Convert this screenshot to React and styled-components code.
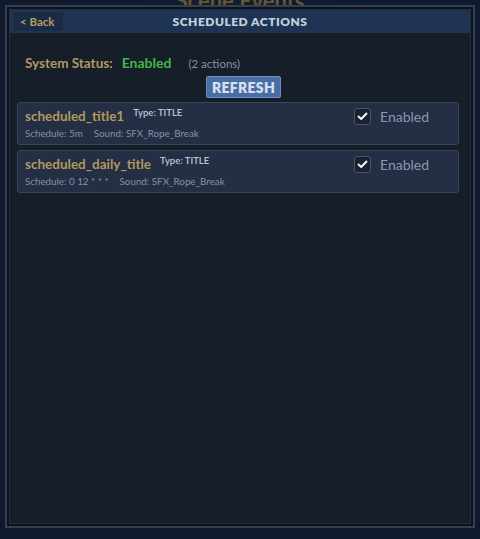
import React, { useState } from 'react';
import styled, { createGlobalStyle } from 'styled-components';

const GlobalStyle = createGlobalStyle`
  html, body {
    margin: 0;
    padding: 0;
    background: #111a2b;
    font-family: Lato, "Open Sans", sans-serif;
  }
  * { box-sizing: border-box; }
`;

const Page = styled.div`
  position: relative;
  width: 480px;
  height: 539px;
  padding: 5px 5px 11px 5px;
  overflow: hidden;
  background: radial-gradient(ellipse at 50% 40%, #152036 0%, #101a2c 70%);
`;

const BackdropTitle = styled.div`
  position: absolute;
  top: -13px;
  left: 0;
  right: 0;
  text-align: center;
  font-size: 22px;
  font-weight: 700;
  color: #7a6533;
  opacity: 0.8;
`;

const Frame = styled.div`
  position: relative;
  height: 100%;
  border: 2px solid #363f52;
  padding: 2px;
  background: #0d131e;
`;

const Panel = styled.div`
  height: 100%;
  display: flex;
  flex-direction: column;
  background: #161e2a;
  border: 1px solid #262f3e;
`;

const Header = styled.div`
  position: relative;
  height: 23px;
  display: flex;
  align-items: center;
  justify-content: center;
  background: #1e3452;
`;

const BackButton = styled.button`
  position: absolute;
  left: 3px;
  top: 2px;
  height: 19px;
  width: 50px;
  border: none;
  background: #1a2c45;
  color: #b49d5e;
  font-family: Lato, sans-serif;
  font-weight: 700;
  font-size: 11.5px;
  padding: 0 0 0 7px;
  text-align: left;
  cursor: pointer;
`;

const Title = styled.h1`
  margin: 0;
  font-size: 12px;
  font-weight: 800;
  letter-spacing: 0.5px;
  color: #c3d0de;
`;

const Body = styled.div`
  flex: 1;
  padding: 21px 11px 0 7px;
  display: flex;
  flex-direction: column;
`;

const StatusRow = styled.div`
  display: flex;
  align-items: baseline;
  padding-left: 8px;
  height: 22px;
`;

const StatusLabel = styled.span`
  color: #b09a5c;
  font-weight: 700;
  font-size: 13.5px;
`;

const StatusValue = styled.span`
  color: #46b548;
  font-weight: 700;
  font-size: 14px;
  margin-left: 9px;
`;

const Count = styled.span`
  color: #8790a0;
  font-size: 11.5px;
  margin-left: 17px;
`;

const RefreshRow = styled.div`
  display: flex;
  justify-content: center;
  margin-bottom: 4px;
  padding-left: 11px;
`;

const RefreshButton = styled.button`
  height: 22px;
  padding: 0 5px;
  background: #4a6ea4;
  border: 1px solid #6a8dc2;
  border-radius: 2px;
  color: #d6e2ef;
  font-family: Lato, sans-serif;
  font-weight: 800;
  font-size: 14px;
  letter-spacing: 0.3px;
  cursor: pointer;
`;

const CardList = styled.div`
  display: flex;
  flex-direction: column;
  gap: 5px;
`;

const Card = styled.div`
  display: flex;
  justify-content: space-between;
  height: 43px;
  padding: 3px 0 0 7px;
  background: #242e44;
  border: 1px solid #3a4457;
  border-radius: 3px;
`;

const CardInfo = styled.div`
  display: flex;
  flex-direction: column;
`;

const NameLine = styled.div`
  display: flex;
  align-items: flex-start;
  gap: 9px;
`;

const Name = styled.span`
  color: #b09a5c;
  font-weight: 700;
  font-size: 13.5px;
  margin-top: 2px;
`;

const TypeTag = styled.span`
  color: #c0c6d2;
  font-size: 9.5px;
  font-weight: 600;
  margin-top: 1px;
`;

const Meta = styled.div`
  display: flex;
  gap: 11px;
  margin-top: 3px;
  color: #8891a3;
  font-size: 9.8px;
`;

const Toggle = styled.label`
  display: flex;
  align-items: center;
  gap: 9px;
  height: 18px;
  margin-top: 1px;
  width: 104px;
  color: #8898ad;
  font-size: 14px;
  cursor: pointer;
`;

const Box = styled.span`
  width: 17px;
  height: 17px;
  border-radius: 3px;
  border: 1px solid #4a5469;
  background: #1a2131;
  display: flex;
  align-items: center;
  justify-content: center;
`;

const actions = [
  { name: 'scheduled_title1', type: 'TITLE', schedule: '5m', sound: 'SFX_Rope_Break' },
  { name: 'scheduled_daily_title', type: 'TITLE', schedule: '0 12 * * *', sound: 'SFX_Rope_Break' }
];

const ActionCard = ({ action }) => {
  const [enabled, setEnabled] = useState(true);
  return (
    <Card>
      <CardInfo>
        <NameLine>
          <Name>{action.name}</Name>
          <TypeTag>Type: {action.type}</TypeTag>
        </NameLine>
        <Meta>
          <span>Schedule: {action.schedule}</span>
          <span>Sound: {action.sound}</span>
        </Meta>
      </CardInfo>
      <Toggle onClick={() => setEnabled(!enabled)}>
        <Box>
          {enabled && (
            <svg width="11" height="9" viewBox="0 0 11 9">
              <path d="M1.5 4.5 L4.2 7 L9.5 1.5" fill="none" stroke="#f2f4f8" strokeWidth="2" strokeLinecap="round" strokeLinejoin="round" />
            </svg>
          )}
        </Box>
        Enabled
      </Toggle>
    </Card>
  );
};

const App = () => (
  <>
    <GlobalStyle />
    <Page>
      <BackdropTitle>Scene Events</BackdropTitle>
      <Frame>
        <Panel>
          <Header>
            <BackButton>&lt; Back</BackButton>
            <Title>SCHEDULED ACTIONS</Title>
          </Header>
          <Body>
            <StatusRow>
              <StatusLabel>System Status:</StatusLabel>
              <StatusValue>Enabled</StatusValue>
              <Count>(2 actions)</Count>
            </StatusRow>
            <RefreshRow>
              <RefreshButton>REFRESH</RefreshButton>
            </RefreshRow>
            <CardList>
              {actions.map(a => (
                <ActionCard key={a.name} action={a} />
              ))}
            </CardList>
          </Body>
        </Panel>
      </Frame>
    </Page>
  </>
);

export default App;
